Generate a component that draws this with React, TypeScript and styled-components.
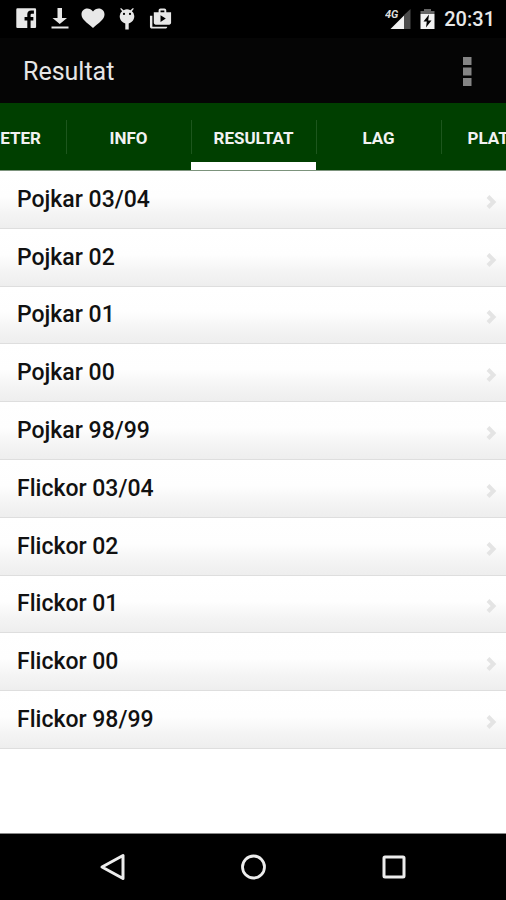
import React from "react";
import styled, { createGlobalStyle } from "styled-components";

const GlobalStyle = createGlobalStyle`
  * { box-sizing: border-box; }
  body { margin: 0; background: #000; font-family: Roboto, "Liberation Sans", sans-serif; }
  button { font: inherit; border: 0; padding: 0; margin: 0; background: none; cursor: pointer; }
`;

const Screen = styled.div`
  display: flex;
  flex-direction: column;
  min-height: 100vh;
  overflow: hidden;
  background: #fff;
`;

const StatusBar = styled.div`
  display: flex;
  align-items: center;
  justify-content: space-between;
  height: 38px;
  padding: 0 11px 0 16px;
  background: #000;
  color: #e8e8e8;
`;

const StatusGroup = styled.div<{ $gap: number }>`
  display: flex;
  align-items: center;
  gap: ${(p) => p.$gap}px;
  svg { display: block; }
`;

const Clock = styled.time`
  font-size: 20px;
  font-weight: 500;
  line-height: 24px;
`;

const AppBar = styled.header`
  display: flex;
  align-items: center;
  justify-content: space-between;
  height: 65px;
  padding: 2px 22px 0 23px;
  background: #050505;
`;

const Title = styled.h1`
  margin: 0;
  font-size: 25px;
  font-weight: 400;
  line-height: 32px;
  color: #e6e6e6;
`;

const MenuButton = styled.button`
  display: flex;
  align-items: center;
  height: 48px;
  padding: 0 12px;
`;

const Tabs = styled.nav`
  display: flex;
  justify-content: center;
  height: 68px;
  overflow: hidden;
  background: #003f00;
  border-bottom: 1px solid #7c937c;
`;

const Tab = styled.button<{ $active?: boolean }>`
  display: flex;
  flex: 0 0 125px;
  align-items: center;
  border-bottom: 8px solid ${(p) => (p.$active ? "#fff" : "transparent")};
  padding-top: 8px;
  color: #f2f2f2;
`;

const TabLabel = styled.span`
  flex: 1;
  padding-top: 2px;
  font-size: 17px;
  font-weight: 700;
  line-height: 32px;
  text-align: center;
  border-left: 1px solid #1d561d;
`;

const List = styled.ul`
  display: flex;
  flex: 1;
  flex-direction: column;
  margin: 0;
  padding: 0 0 84px;
  list-style: none;
`;

const Item = styled.li`
  display: flex;
  flex: 1;
  min-height: 48px;
  border-bottom: 1px solid #dedede;
`;

const ItemButton = styled.button`
  display: flex;
  flex: 1;
  align-items: center;
  justify-content: space-between;
  padding: 1px 9px 0 17px;
  background: linear-gradient(#fff 0%, #fefefe 45%, #f4f4f4 75%, #eee 100%);
  color: #111;
  font-size: 23px;
  font-weight: 500;
  line-height: 28px;
  text-align: left;
  svg { margin-top: 4px; }
`;

const NavBar = styled.nav`
  display: flex;
  align-items: center;
  justify-content: center;
  gap: 93px;
  height: 67px;
  background: #000;
  border-top: 1px solid #888;
`;

const NavButton = styled.button`
  display: flex;
  align-items: center;
  justify-content: center;
  width: 48px;
  height: 48px;
`;

const Notifications = () => (
  <svg width="156" height="22" viewBox="0 0 156 22" fill="#e8e8e8" aria-hidden="true">
    <path transform="translate(-3 -3) scale(1.1)" fillRule="evenodd" d="M4 3h16a1 1 0 0 1 1 1v16a1 1 0 0 1-1 1H4a1 1 0 0 1-1-1V4a1 1 0 0 1 1-1zM19 5h-2.500A3.500 3.500 0 0 0 13 8.500V11h-2.500v3H13v7h3v-7h2.500v-3H16V9a1 1 0 0 1 1-1h2z" />
    <path d="M41.500 0h4.500v10h5L43.750 16 36.500 10h5zM35.500 18.500h17v2h-17z" />
    <path d="M77 20C71 14.500 65.500 11.500 65.500 6.500 65.500 3 68 .5 71.300.5c2.200 0 4.300 1.100 5.700 3 1.400-1.900 3.500-3 5.700-3C86 .5 88.500 3 88.500 6.500c0 5-5.500 8-11.500 13.500z" />
    <path fillRule="evenodd" d="M105 0l2.600 2.200q3.400-1.700 6.800 0L117 0l.8.700-1.900 2.600q2.400 1.700 2.400 4.700c0 4-2.700 6.800-5.600 7.400V21.500h-3.400v-6.100c-2.900-.6-5.600-3.400-5.600-7.400q0-3 2.400-4.700L104.200.7zM108 4.800a1.100 1.100 0 1 0 0 2.200 1.100 1.100 0 0 0 0-2.200zm6 0a1.100 1.100 0 1 0 0 2.200 1.100 1.100 0 0 0 0-2.200z" />
    <path transform="translate(133 -.5) scale(.96)" fillRule="evenodd" d="M3.500 8.500H1V20c0 1.110.89 2 2 2h14c1.110 0 2-.89 2-2H3.500zM18 5V3c0-1.110-.89-2-2-2h-4c-1.110 0-2 .89-2 2v2H5v11c0 1.110.89 2 2 2h14c1.110 0 2-.89 2-2V5zm-6-2h4v2h-4zm0 12V8l5.500 3.500z" />
  </svg>
);

const Signal = () => (
  <svg width="26" height="22" viewBox="0 0 26 22" aria-hidden="true">
    <path d="M25.500 1v20H19V7z" fill="#4c4c4c" />
    <path d="M19 7.500V21H5.500z" fill="#f2f2f2" />
    <text x="0" y="10" fill="#ddd" fontFamily="Roboto" fontSize="11" fontWeight="700" fontStyle="italic">4G</text>
  </svg>
);

const Battery = () => (
  <svg width="15" height="22" viewBox="0 0 15 22" aria-hidden="true">
    <path d="M4 1h7v2h3.500v3H.5V3H4z" fill="#666" />
    <path fillRule="evenodd" d="M.5 6h14v15H.5zM9 6.500l-5.500 7h3.300L6 19.500l5.500-7H8.200z" fill="#f2f2f2" />
  </svg>
);

const Chevron = () => (
  <svg width="12" height="16" viewBox="0 0 12 16" fill="none" stroke="#e4e4e4" strokeWidth="4" aria-hidden="true">
    <path d="M3 2.500L8.500 8 3 13.500" />
  </svg>
);

const tabs = ["NYHETER", "INFO", "RESULTAT", "LAG", "PLATSER"];
const groups = [
  "Pojkar 03/04", "Pojkar 02", "Pojkar 01", "Pojkar 00", "Pojkar 98/99",
  "Flickor 03/04", "Flickor 02", "Flickor 01", "Flickor 00", "Flickor 98/99",
];

export default function App() {
  return (
    <Screen>
      <GlobalStyle />
      <StatusBar>
        <StatusGroup $gap={0}><Notifications /></StatusGroup>
        <StatusGroup $gap={9}>
          <Signal />
          <Battery />
          <Clock>20:31</Clock>
        </StatusGroup>
      </StatusBar>
      <AppBar>
        <Title>Resultat</Title>
        <MenuButton aria-label="Meny">
          <svg width="9" height="30" viewBox="0 0 9 30" fill="#858585" aria-hidden="true">
            <path d="M0 0h8.500v8H0zM0 10.500h8.500v8H0zM0 21h8.500v8H0z" />
          </svg>
        </MenuButton>
      </AppBar>
      <Tabs>
        {tabs.map((name) => (
          <Tab key={name} $active={name === "RESULTAT"} aria-current={name === "RESULTAT" ? "page" : undefined}>
            <TabLabel>{name}</TabLabel>
          </Tab>
        ))}
      </Tabs>
      <List>
        {groups.map((name) => (
          <Item key={name}>
            <ItemButton>
              {name}
              <Chevron />
            </ItemButton>
          </Item>
        ))}
      </List>
      <NavBar>
        <NavButton aria-label="Tillbaka">
          <svg width="28" height="30" viewBox="0 0 28 30" fill="none" stroke="#ededed" strokeWidth="3" strokeLinejoin="round" aria-hidden="true">
            <path d="M25 3.500v23L4 15z" />
          </svg>
        </NavButton>
        <NavButton aria-label="Hem">
          <svg width="26" height="26" viewBox="0 0 26 26" fill="none" stroke="#ededed" strokeWidth="2.800" aria-hidden="true">
            <circle cx="13.500" cy="13" r="11" />
          </svg>
        </NavButton>
        <NavButton aria-label="Översikt">
          <svg width="24" height="24" viewBox="0 0 24 24" fill="none" stroke="#ededed" strokeWidth="3" aria-hidden="true">
            <rect x="2" y="2" width="20" height="20" rx="1" />
          </svg>
        </NavButton>
      </NavBar>
    </Screen>
  );
}
